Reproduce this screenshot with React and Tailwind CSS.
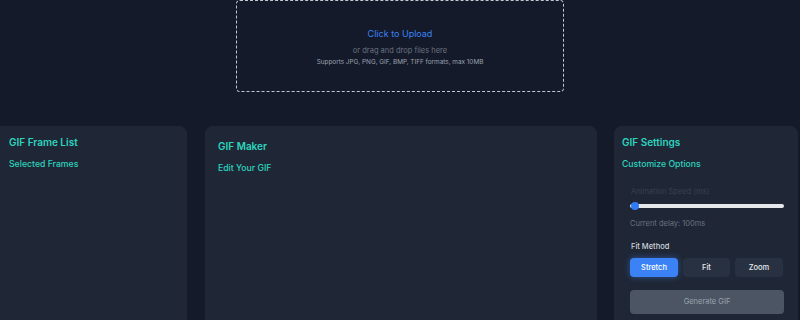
export default function App() {
  return (
    <div className="w-[800px] h-[320px] overflow-hidden bg-[#141a29]" style={{ fontFamily: "Inter, 'Noto Sans', sans-serif" }}>
      <div className="flex justify-center">
        <div className="w-[328px] h-[92px] border border-dashed border-[#c3c7cf] rounded-[4px] flex flex-col items-center justify-center pt-[2px]">
          <div className="text-[9px] text-[#3b82f6] leading-none mb-[1px]">Click to Upload</div>
          <div className="text-[7.5px] text-[#6b7280] leading-none mt-[8px]">or drag and drop files here</div>
          <div className="text-[6.4px] text-[#9ca3af] leading-none mt-[5px]">Supports JPG, PNG, GIF, BMP, TIFF formats, max 10MB</div>
        </div>
      </div>
      <div className="flex mt-[34px] gap-[18px]">
        <div className="w-[187px] h-[220px] bg-[#1f2736] rounded-r-[8px] px-[9px] pt-[9px]">
          <div className="text-[10px] font-semibold text-[#2dd4bf] leading-[14px]">GIF Frame List</div>
          <div className="text-[8.7px] font-medium text-[#2dd4bf] leading-[12px] mt-[9px]">Selected Frames</div>
        </div>
        <div className="w-[392px] h-[220px] bg-[#1f2736] rounded-[8px] px-[13px] pt-[13px]">
          <div className="text-[10px] font-semibold text-[#2dd4bf] leading-[14px]">GIF Maker</div>
          <div className="text-[8.7px] font-medium text-[#2dd4bf] leading-[12px] mt-[9px]">Edit Your GIF</div>
        </div>
        <div className="w-[184px] ml-[-1px] h-[220px] bg-[#1f2736] rounded-[8px] pt-[9px]">
          <div className="px-[8px]">
            <div className="text-[10px] font-semibold text-[#2dd4bf] leading-[14px]">GIF Settings</div>
            <div className="text-[8.7px] font-medium text-[#2dd4bf] leading-[12px] mt-[9px]">Customize Options</div>
          </div>
          <div className="pl-[16px] pr-[14px] mt-[17px]">
            <div className="text-[7.5px] text-[#374151] leading-[10px] pl-[1px]">Animation Speed (ms)</div>
            <div className="relative mt-[5px] h-[8px] flex items-center">
              <div className="w-full h-[4px] rounded-full bg-[#e5e7eb]"></div>
              <div className="absolute left-[1px] top-0 w-[8px] h-[8px] rounded-full bg-[#2f7cf6]"></div>
            </div>
            <div className="text-[7.5px] text-[#6b7280] leading-[10px] mt-[9px]">Current delay: 100ms</div>
            <div className="text-[7.5px] font-medium text-[#d1d5db] leading-[10px] mt-[13px] pl-[1px]">Fit Method</div>
            <div className="flex gap-[5px] mt-[6px]">
              <div className="w-[48px] h-[19px] rounded-[4px] bg-[#3b82f6] text-white text-[7.5px] font-medium flex items-center justify-center shadow-[0_0_6px_rgba(59,130,246,0.5)]">Stretch</div>
              <div className="w-[47px] h-[19px] rounded-[4px] bg-[#283142] text-[#e5e7eb] text-[7.5px] font-medium flex items-center justify-center">Fit</div>
              <div className="w-[48px] h-[19px] rounded-[4px] bg-[#283142] text-[#e5e7eb] text-[7.5px] font-medium flex items-center justify-center">Zoom</div>
            </div>
            <div className="mt-[13px] h-[24px] rounded-[4px] bg-[#4b5563] text-[#9ca3af] text-[7.5px] flex items-center justify-center">Generate GIF</div>
          </div>
        </div>
      </div>
    </div>
  );
}
